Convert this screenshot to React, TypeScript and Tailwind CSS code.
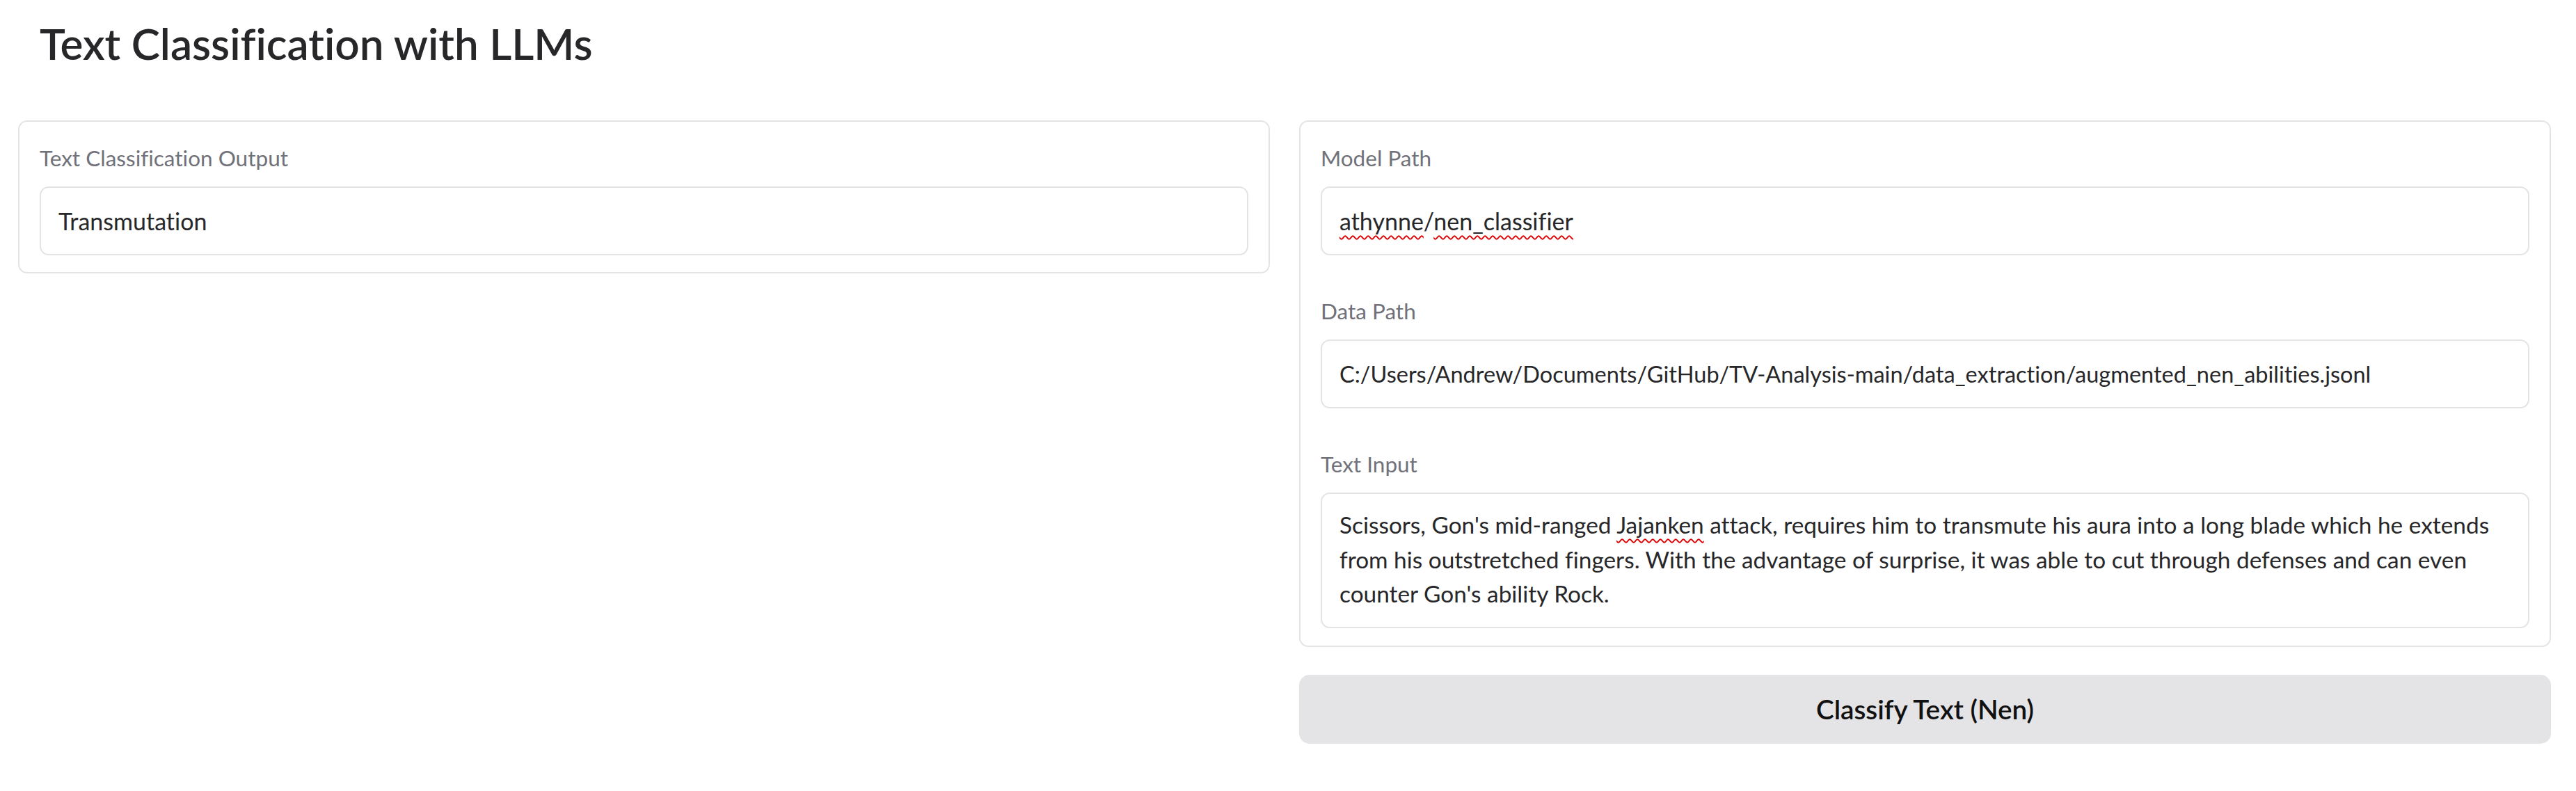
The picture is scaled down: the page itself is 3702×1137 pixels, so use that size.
import React from "react";

const font = { fontFamily: "Lato, 'Noto Sans', sans-serif" };

function Label({ children }: { children: React.ReactNode }) {
  return (
    <div className="text-[31.5px] leading-[46px] mb-[18px] text-[#71717a]">{children}</div>
  );
}

function Squiggle({ children }: { children: React.ReactNode }) {
  return (
    <span className="underline decoration-wavy decoration-[#e00000] decoration-[2px] underline-offset-[7px]">
      {children}
    </span>
  );
}

function InputBox({ children, size = "text-[34px]" }: { children: React.ReactNode; size?: string }) {
  return (
    <div
      className={
        "h-[99px] border-2 border-[#e4e4e7] rounded-[13px] bg-white flex items-center pl-[25px] pr-[25px] leading-[53px] text-[#27272a] whitespace-nowrap overflow-hidden " +
        size
      }
    >
      {children}
    </div>
  );
}

export default function App() {
  return (
    <div className="min-h-screen bg-white [font-variant-ligatures:none]" style={font}>
      <div className="pl-[26px] pr-[36px]">
        <div className="h-[173px] pt-[24px] px-[31px]">
          <h1 className="text-[62px] leading-[76px] font-semibold text-[#27272a]">
            Text Classification with LLMs
          </h1>
        </div>
        <div className="flex gap-[42px] items-start">
          <div className="flex-1 min-w-0">
            <div className="border-2 border-[#e4e4e7] rounded-[13px] bg-white pt-[29px] px-[29px] pb-[24px]">
              <Label>Text Classification Output</Label>
              <InputBox>Transmutation</InputBox>
            </div>
          </div>
          <div className="flex-1 min-w-0 flex flex-col gap-[40px]">
            <div className="border-2 border-[#e4e4e7] rounded-[13px] bg-white flex flex-col gap-[3px]">
              <div className="pt-[29px] px-[29px] pb-[25px]">
                <Label>Model Path</Label>
                <InputBox>
                  <span>
                    <Squiggle>athynne</Squiggle>/<Squiggle>nen_classifier</Squiggle>
                  </span>
                </InputBox>
              </div>
              <div className="pt-[29px] px-[29px] pb-[25px]">
                <Label>Data Path</Label>
                <InputBox size="text-[32.5px]">
                  C:/Users/Andrew/Documents/GitHub/TV-Analysis-main/data_extraction/augmented_nen_abilities.jsonl
                </InputBox>
              </div>
              <div className="pt-[29px] px-[29px] pb-[25px]">
                <Label>Text Input</Label>
                <div className="h-[195px] border-2 border-[#e4e4e7] rounded-[13px] bg-white pt-[20px] px-[25px] text-[33.4px] leading-[49.5px] text-[#27272a] overflow-hidden">
                  <div className="whitespace-nowrap">
                    Scissors, Gon's mid-ranged <Squiggle>Jajanken</Squiggle> attack, requires him to transmute his aura into a long blade which he extends
                  </div>
                  <div className="whitespace-nowrap">
                    from his outstretched fingers. With the advantage of surprise, it was able to cut through defenses and can even
                  </div>
                  <div className="whitespace-nowrap">counter Gon's ability Rock.</div>
                </div>
              </div>
            </div>
            <button className="h-[99px] w-full rounded-[15px] bg-[#e4e4e7] text-[38.7px] font-semibold text-[#111111]">
              Classify Text (Nen)
            </button>
          </div>
        </div>
      </div>
    </div>
  );
}
